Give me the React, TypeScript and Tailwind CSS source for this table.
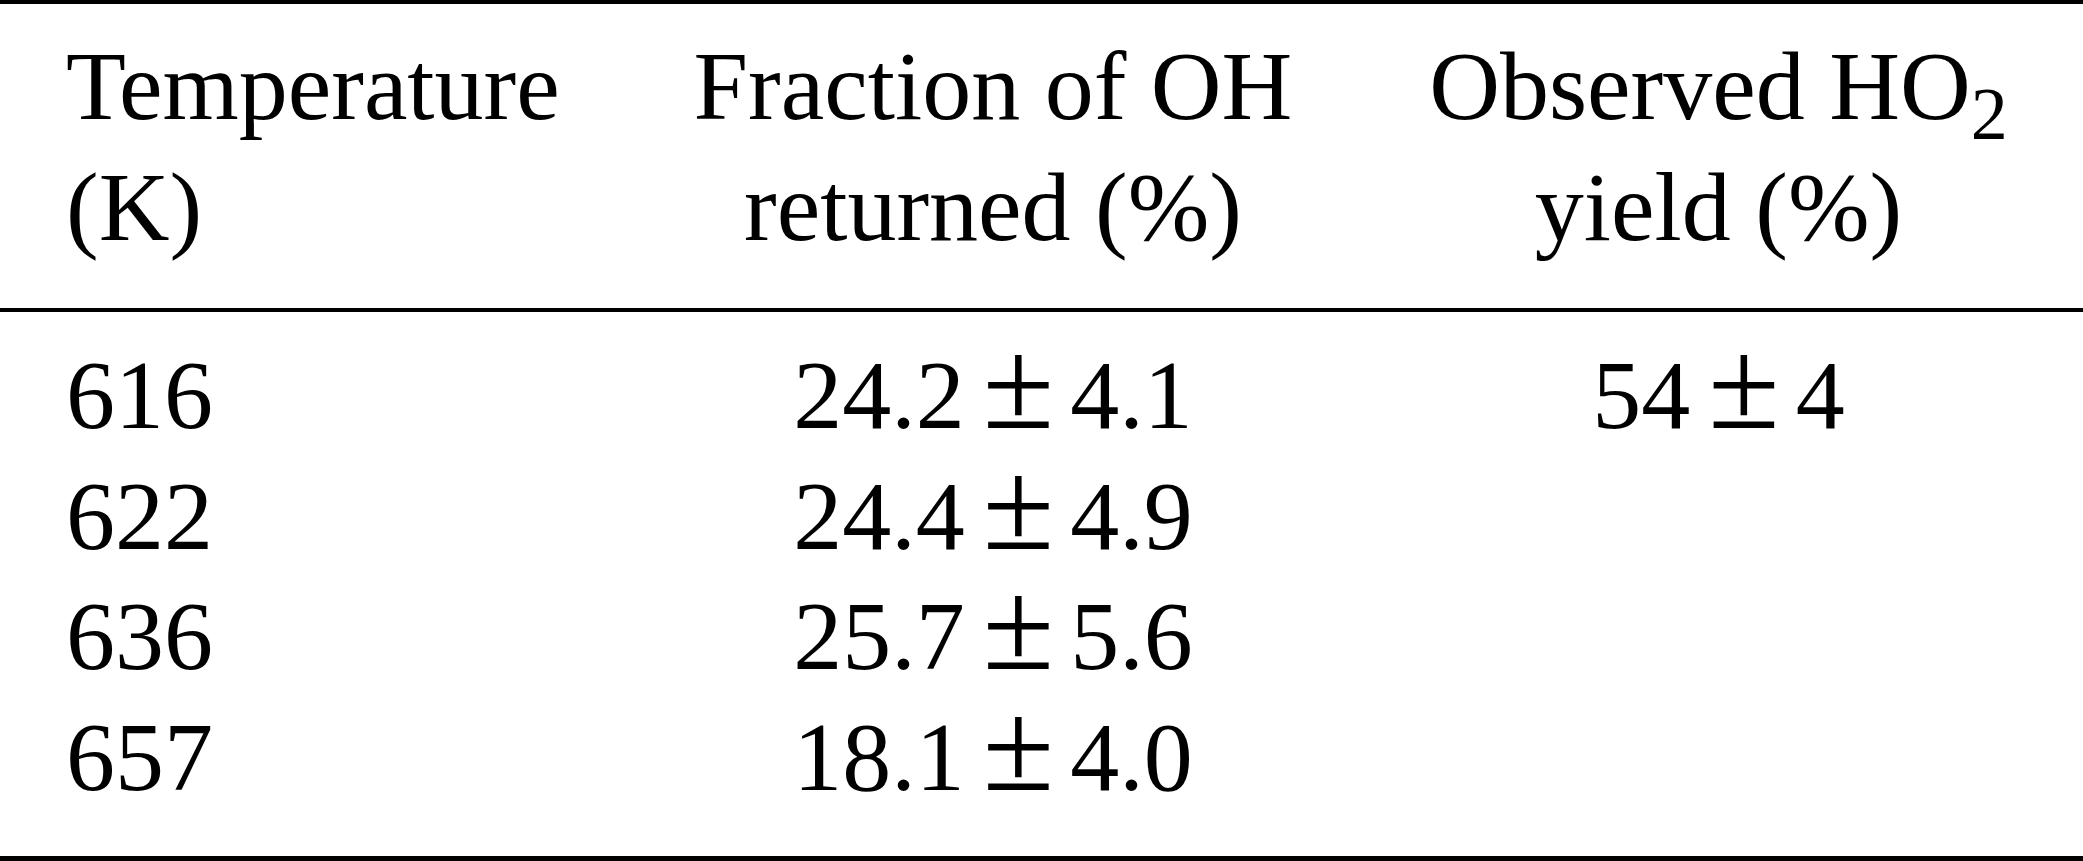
import React from "react";

function Pm() {
  return <span className="ml-[18px] mr-[16px] text-[130px] leading-[0]">±</span>;
}

const rows: [string, string, string, string | null][] = [
  ["616", "24.2", "4.1", "54"],
  ["622", "24.4", "4.9", null],
  ["636", "25.7", "5.6", null],
  ["657", "18.1", "4.0", null],
];

export default function App() {
  return (
    <div className="w-[2083px] h-[861px] overflow-hidden bg-white text-black font-['Liberation_Serif',serif] text-[98px] leading-[121px]">
      <div className="h-[4px] bg-black" />
      <div className="grid grid-cols-[632px_722px_1fr] pt-[22px] pb-[40px]">
        <div className="pl-[66px]">
          Temperature
          <br />
          (K)
        </div>
        <div className="text-center">
          Fraction of OH
          <br />
          returned (%)
        </div>
        <div className="text-center">
          Observed HO
          <span className="text-[74px] leading-[0] align-[-20px]">2</span>
          <br />
          yield (%)
        </div>
      </div>
      <div className="h-[4px] bg-black" />
      <div className="grid grid-cols-[632px_722px_1fr] pt-[23px] pb-[39px] leading-[120.5px]">
        {rows.map(([t, f, fe, y]) => (
          <React.Fragment key={t}>
            <div className="pl-[66px]">{t}</div>
            <div className="text-center whitespace-nowrap">
              {f}
              <Pm />
              {fe}
            </div>
            <div className="text-center whitespace-nowrap">
              {y ? (
                <>
                  {y}
                  <Pm />
                  4
                </>
              ) : (
                "\u00a0"
              )}
            </div>
          </React.Fragment>
        ))}
      </div>
      <div className="h-[6px] bg-black" />
    </div>
  );
}
